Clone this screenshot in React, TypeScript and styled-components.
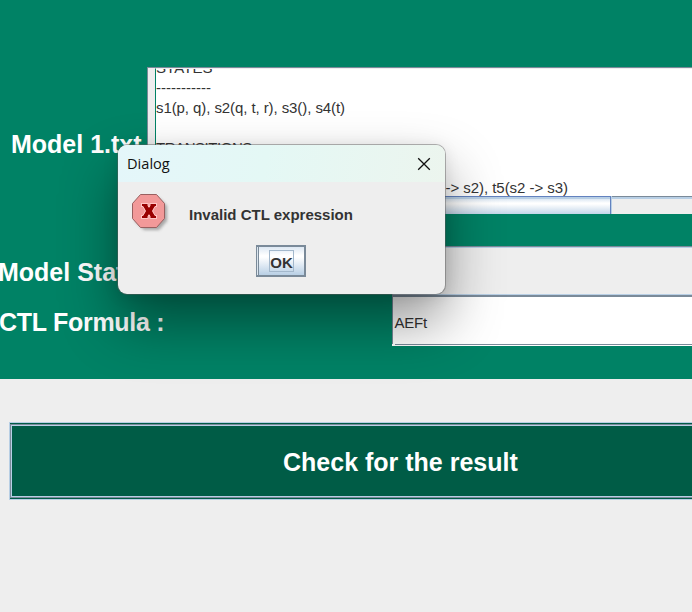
import React from "react";
import styled, { createGlobalStyle } from "styled-components";

const GlobalStyle = createGlobalStyle`
  * { box-sizing: border-box; }
  body { margin: 0; background: #eeeeee; overflow: hidden; }
`;

const Window = styled.main`
  position: relative;
  width: 692px;
  height: 612px;
  overflow: hidden;
  background: #eeeeee;
  color: #333333;
  font-family: "Liberation Sans", Arial, sans-serif;
`;

const Form = styled.section`
  display: flex;
  flex-direction: column;
  height: 379px;
  padding-top: 67px;
  background: #008265;
`;

const Row = styled.div<{ $height: number; $gap?: number }>`
  display: flex;
  height: ${(p) => p.$height}px;
  margin-bottom: ${(p) => p.$gap ?? 0}px;
`;

const Label = styled.label<{ $width: number; $indent?: number; $shift?: number; $tracking?: number }>`
  flex: none;
  display: flex;
  align-items: center;
  width: ${(p) => p.$width}px;
  padding-top: ${(p) => p.$shift ?? 0}px;
  text-indent: ${(p) => p.$indent ?? 0}px;
  color: #ffffff;
  font-size: 25px;
  font-weight: bold;
  letter-spacing: ${(p) => p.$tracking ?? 0}px;
  white-space: nowrap;
`;

const ScrollPane = styled.div`
  flex: 1;
  display: flex;
  flex-direction: column;
  border-top: 1px solid #7a8a99;
  border-left: 1px solid #7a8a99;
  background: #eeeeee;
`;

const ModelText = styled.pre`
  height: 128px;
  margin: 0 0 0 7px;
  overflow: hidden;
  border-left: 1px solid #008265;
  border-top: 1px solid #eeeeee;
  background: #ffffff;
  font-family: "Liberation Sans", Arial, sans-serif;
  font-size: 15px;
  line-height: 20px;
`;

const ModelLine = styled.div<{ $tracking?: number }>`
  height: 20px;
  letter-spacing: ${(p) => p.$tracking ?? 0}px;

  &:first-child {
    margin-top: -11px;
  }
`;

const ScrollTrack = styled.div`
  flex: 1;
  display: flex;
  margin-left: 7px;
  border-top: 1px solid #7a8a99;
  box-shadow: inset 0 2px #b8cfe5;
`;

const ScrollThumb = styled.div`
  width: 456px;
  margin-top: -1px;
  border-top: 1px solid #6382bf;
  border-right: 1px solid #6382bf;
  background: linear-gradient(#b8cfe5 0 2px, #dde8f3 2px, #ffffff 6px, #ffffff 7px, #c3d6e9 17px);
  box-shadow: 1px 0 #b8cfe5;
`;

const StateField = styled.div`
  flex: 1;
  border-top: 1px solid #7a8a99;
  border-bottom: 1px solid #b8cfe5;
  border-left: 1px solid #7a8a99;
  background: #eeeeee;
  box-shadow: inset 0 1px #b8cfe5;
`;

const FormulaField = styled.div`
  flex: 1;
  display: flex;
  flex-direction: column;
  border-top: 2px solid #7a8a99;
  background: #ffffff;
`;

const FormulaText = styled.div`
  flex: 1;
  display: flex;
  align-items: center;
  padding: 3px 0 0 1.5px;
  border-left: 1px solid #7a8a99;
  font-size: 15px;
  letter-spacing: -0.2px;
`;

const FormulaEdge = styled.div`
  height: 2px;
  margin-left: 3px;
  border-top: 1px solid #7a8a99;
`;

const Actions = styled.section`
  padding: 43px 0 0 9px;
`;

const CheckButton = styled.button`
  display: block;
  width: 800px;
  height: 78px;
  padding: 1px 0 1px 0;
  border: 1px solid #b8cfe5;
  border-right: 0;
  background: #005c46;
  color: #ffffff;
  font: bold 25px "Liberation Sans", Arial, sans-serif;
`;

const CheckFace = styled.span`
  display: flex;
  align-items: center;
  height: 74px;
  padding: 2px 0 0 272px;
  border: 1px solid #7a8a99;
  box-shadow: inset 0 0 0 1px #b8cfe5;
`;

const Dialog = styled.div`
  position: absolute;
  left: 118px;
  top: 145px;
  width: 327px;
  height: 149px;
  overflow: hidden;
  border-radius: 9px;
  background: #eeeeee;
  box-shadow: 0 0 0 1px rgba(90, 90, 90, 0.45), 0 28px 56px rgba(0, 0, 0, 0.42), 0 2px 16px rgba(0, 0, 0, 0.1);
`;

const TitleBar = styled.header`
  display: flex;
  align-items: center;
  justify-content: space-between;
  height: 37px;
  padding: 0 14px 0 9px;
  background: linear-gradient(100deg, #e4f6fa 0%, #e4f8f5 45%, #ecf5ee 100%);
  color: #111111;
  font-family: "Open Sans", "Noto Sans", sans-serif;
  font-size: 14.6px;
`;

const Title = styled.span`
  padding-bottom: 2px;
`;

const Message = styled.div`
  display: flex;
  height: 63px;
  padding: 9px 0 0 12px;
  gap: 16px;
  font-size: 15px;
  font-weight: bold;
`;

const MessageText = styled.span`
  padding-top: 15px;
  line-height: 18px;
`;

const OkButton = styled.button`
  display: flex;
  align-items: center;
  justify-content: center;
  width: 50px;
  height: 32px;
  margin-left: 138px;
  padding: 0;
  border: 2px solid #7a8a99;
  border-left-width: 1px;
  box-shadow: inset 1px 0 #dce6ef, inset 2px 0 #7a8a99;
  background: linear-gradient(#dde8f3, #ffffff 30%, #ffffff 36%, #b8cfe5);
  color: #333333;
  font: bold 15px "Liberation Sans", Arial, sans-serif;
`;

const OkFocus = styled.span`
  display: flex;
  align-items: center;
  justify-content: center;
  width: 25px;
  height: 22px;
  padding-top: 3px;
  margin-left: 2px;
  border: 1px solid #a3b8cc;
`;

const CloseIcon = () => (
  <svg width="14" height="14" viewBox="0 0 14 14" fill="none" stroke="#111" strokeWidth="1.3">
    <path d="M1.2 1.2 12.8 12.8M12.8 1.2 1.2 12.8" />
  </svg>
);

const ErrorIcon = () => (
  <svg width="43" height="43" viewBox="0 0 43 43">
    <defs>
      <filter id="soft" x="-20%" y="-20%" width="150%" height="150%">
        <feGaussianBlur stdDeviation="1.5" />
      </filter>
    </defs>
    <path d="M14 7h15l8 8v15l-8 9H14l-9-9V16z" fill="#777" opacity=".6" filter="url(#soft)" />
    <path d="M10.5 3.5h16l8 9v15l-8 9h-16l-8-9v-15z" fill="#f29999" stroke="#996060" />
    <path
      d="M12 13h5.5v2l1.500 2.500 1.500-2.500v-2H26v2h-1.500L22 20l2.500 5H26v2h-5.500v-2L19 22.500 17.500 25v2H12v-2h1.500L16 20l-2.500-5H12z"
      fill="#990000"
      stroke="#ffc4c4"
      strokeWidth="2"
      paintOrder="stroke"
    />
    <path d="M14.500 14l9 12M23.500 14l-9 12" stroke="#990000" strokeWidth="3.600" />
  </svg>
);

export default function App() {
  return (
    <>
      <GlobalStyle />
      <Window>
        <Form>
          <Row $height={147} $gap={32}>
            <Label $width={147} $indent={11} $shift={7}>Model 1.txt</Label>
            <ScrollPane>
              <ModelText>
                <ModelLine $tracking={0.1}>STATES</ModelLine>
                <ModelLine>-----------</ModelLine>
                <ModelLine $tracking={-0.08}>s1(p, q), s2(q, t, r), s3(), s4(t)</ModelLine>
                <ModelLine />
                <ModelLine $tracking={-0.45}>TRANSITIONS</ModelLine>
                <ModelLine>----------------</ModelLine>
                <ModelLine $tracking={-0.04}>t1(s1 -&gt; s2), t2(s1 -&gt; s3), t3(s2 -&gt; s4), t4(s4 -&gt; s2), t5(s2 -&gt; s3)</ModelLine>
              </ModelText>
              <ScrollTrack>
                <ScrollThumb />
              </ScrollTrack>
            </ScrollPane>
          </Row>
          <Row $height={49}>
            <Label $width={392} $indent={-2} $shift={4}>Model State :</Label>
            <StateField />
          </Row>
          <Row $height={51}>
            <Label $width={392} $indent={-1} $shift={4} $tracking={-0.28}>CTL Formula :</Label>
            <FormulaField>
              <FormulaText>AEFt</FormulaText>
              <FormulaEdge />
            </FormulaField>
          </Row>
        </Form>
        <Actions>
          <CheckButton>
            <CheckFace>Check for the result</CheckFace>
          </CheckButton>
        </Actions>
        <Dialog role="dialog">
          <TitleBar>
            <Title>Dialog</Title>
            <CloseIcon />
          </TitleBar>
          <Message>
            <ErrorIcon />
            <MessageText>Invalid CTL expression</MessageText>
          </Message>
          <OkButton>
            <OkFocus>OK</OkFocus>
          </OkButton>
        </Dialog>
      </Window>
    </>
  );
}
